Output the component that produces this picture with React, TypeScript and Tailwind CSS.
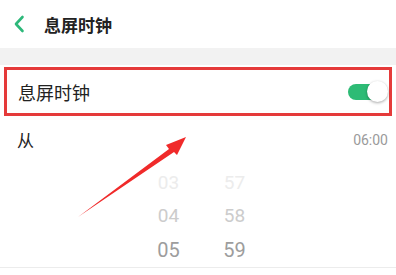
import React from "react";

export default function App() {
  const cjk = { fontFamily: '"Noto Sans CJK SC", "Noto Sans", sans-serif' };
  return (
    <div className="relative w-[396px] h-[275px] overflow-hidden bg-white" style={cjk}>
      <div className="h-[48px] flex items-center bg-white">
        <svg width="12" height="18" viewBox="0 0 12 18" className="ml-[13px]">
          <path d="M9.5 2 L3 9 L9.5 16" fill="none" stroke="#2db87a" strokeWidth="2.6" strokeLinecap="round" strokeLinejoin="round" />
        </svg>
        <span className="ml-[19px] text-[17px] font-bold text-[#222] leading-none">息屏时钟</span>
      </div>
      <div className="h-[17px] bg-[#f2f2f2]" />
      <div className="px-[4px] pt-[2px]">
        <div className="h-[49px] border-[3px] border-[#e53a3a] flex items-center justify-between pl-[11px] pr-0">
          <span className="text-[18px] text-[#222] leading-none">息屏时钟</span>
          <div className="relative w-[40px] h-[20px] mr-[1px]">
            <div className="absolute left-0 top-[2px] w-[36px] h-[16px] rounded-full bg-[#2dbb75]" />
            <div className="absolute right-0 top-[-1px] w-[21px] h-[21px] rounded-full bg-white shadow-[0_1px_3px_rgba(0,0,0,0.35)]" />
          </div>
        </div>
      </div>
      <div className="h-[47px] flex items-center justify-between pl-[17px] pr-[8px]">
        <span className="text-[17px] text-[#222] leading-none">从</span>
        <span className="text-[14px] text-[#9a9a9a] leading-none" style={{ fontFamily: "Roboto, sans-serif" }}>06:00</span>
      </div>
      <div className="flex justify-center gap-[31px] pl-[7px] pt-[4px]" style={{ fontFamily: "Roboto, sans-serif" }}>
        <div className="flex flex-col items-center w-[35px]">
          <div className="h-[33px] flex items-center text-[19px] text-[#ececec]">03</div>
          <div className="h-[33px] flex items-center text-[19px] text-[#cccccc]">04</div>
          <div className="h-[33px] flex items-center text-[20px] text-[#9d9d9d]">05</div>
        </div>
        <div className="flex flex-col items-center w-[35px]">
          <div className="h-[33px] flex items-center text-[19px] text-[#ececec]">57</div>
          <div className="h-[33px] flex items-center text-[19px] text-[#cccccc]">58</div>
          <div className="h-[33px] flex items-center text-[20px] text-[#9d9d9d]">59</div>
        </div>
      </div>
      <div className="mt-[1px] h-[1px] bg-[#ececec]" />
      <svg className="absolute left-0 top-0 pointer-events-none" width="396" height="275" viewBox="0 0 396 275">
        <polygon points="78,217 169,149 166,145 186,137 177,155 174,152" fill="#f02a2a" />
      </svg>
    </div>
  );
}
